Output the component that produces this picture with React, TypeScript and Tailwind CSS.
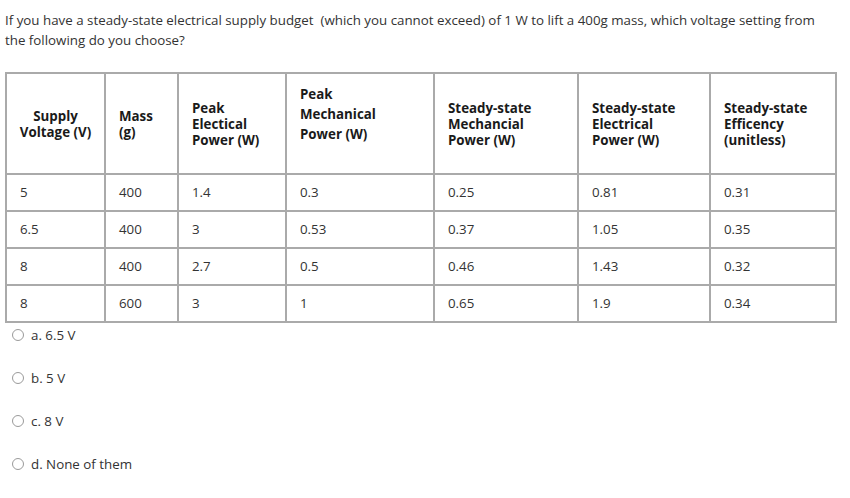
import React from 'react';

const rows = [
  ['5', '400', '1.4', '0.3', '0.25', '0.81', '0.31'],
  ['6.5', '400', '3', '0.53', '0.37', '1.05', '0.35'],
  ['8', '400', '2.7', '0.5', '0.46', '1.43', '0.32'],
  ['8', '600', '3', '1', '0.65', '1.9', '0.34'],
];

const options = ['a. 6.5 V', 'b. 5 V', 'c. 8 V', 'd. None of them'];

const th = 'border-r-2 border-b-2 border-[#aaaaaa] px-[13px] align-middle font-bold leading-[16px] text-[#1a1a1a]';
const td = 'h-[37px] border-r-2 border-b-2 border-[#aaaaaa] px-[13px] align-middle';

export default function App() {
  return (
    <div className="h-[498px] w-[850px] bg-white px-[5px] pt-[10px] font-['Open_Sans',sans-serif] text-[13.33px] text-[#333333]">
      {/* Question */}
      <p className="leading-[20px]">
        If you have a steady-state electrical supply budget{'\u00a0'} (which you cannot exceed) of 1 W to lift a 400g mass, which voltage setting from
        <br />
        the following do you choose?
      </p>

      {/* Data table */}
      <table className="mt-[22px] w-[832px] table-fixed border-separate border-spacing-0 border-t-2 border-l-2 border-[#aaaaaa]">
        <thead>
          <tr className="h-[101px]">
            <th className={`${th} w-[99px] whitespace-nowrap !px-[4px] text-center`}>
              Supply
              <br />
              Voltage (V)
            </th>
            <th className={`${th} w-[73px] text-left`}>
              Mass
              <br />
              (g)
            </th>
            <th className={`${th} w-[108px] text-left`}>
              Peak
              <br />
              Electical
              <br />
              Power (W)
            </th>
            <th className={`${th} w-[148px] text-left`}>
              <p className="mb-[20px] leading-[20px]">
                Peak
                <br />
                Mechanical
                <br />
                Power (W)
              </p>
            </th>
            <th className={`${th} w-[144px] text-left`}>
              Steady-state
              <br />
              Mechancial
              <br />
              Power (W)
            </th>
            <th className={`${th} w-[132px] text-left`}>
              Steady-state
              <br />
              Electrical
              <br />
              Power (W)
            </th>
            <th className={`${th} w-[126px] text-left`}>
              Steady-state
              <br />
              Efficency
              <br />
              (unitless)
            </th>
          </tr>
        </thead>
        <tbody>
          {rows.map((row, i) => (
            <tr key={i}>
              {row.map((cell, j) => (
                <td key={j} className={td}>
                  {cell}
                </td>
              ))}
            </tr>
          ))}
        </tbody>
      </table>

      {/* Answers */}
      <div className="mt-[2px] flex flex-col gap-[23px]">
        {options.map((opt) => (
          <label key={opt} className="flex h-[20px] items-center gap-[7px] leading-[20px]">
            <span className="ml-[7px] h-[12px] w-[12px] rounded-full border border-[#9a9a9a] bg-white" />
            {opt}
          </label>
        ))}
      </div>
    </div>
  );
}
